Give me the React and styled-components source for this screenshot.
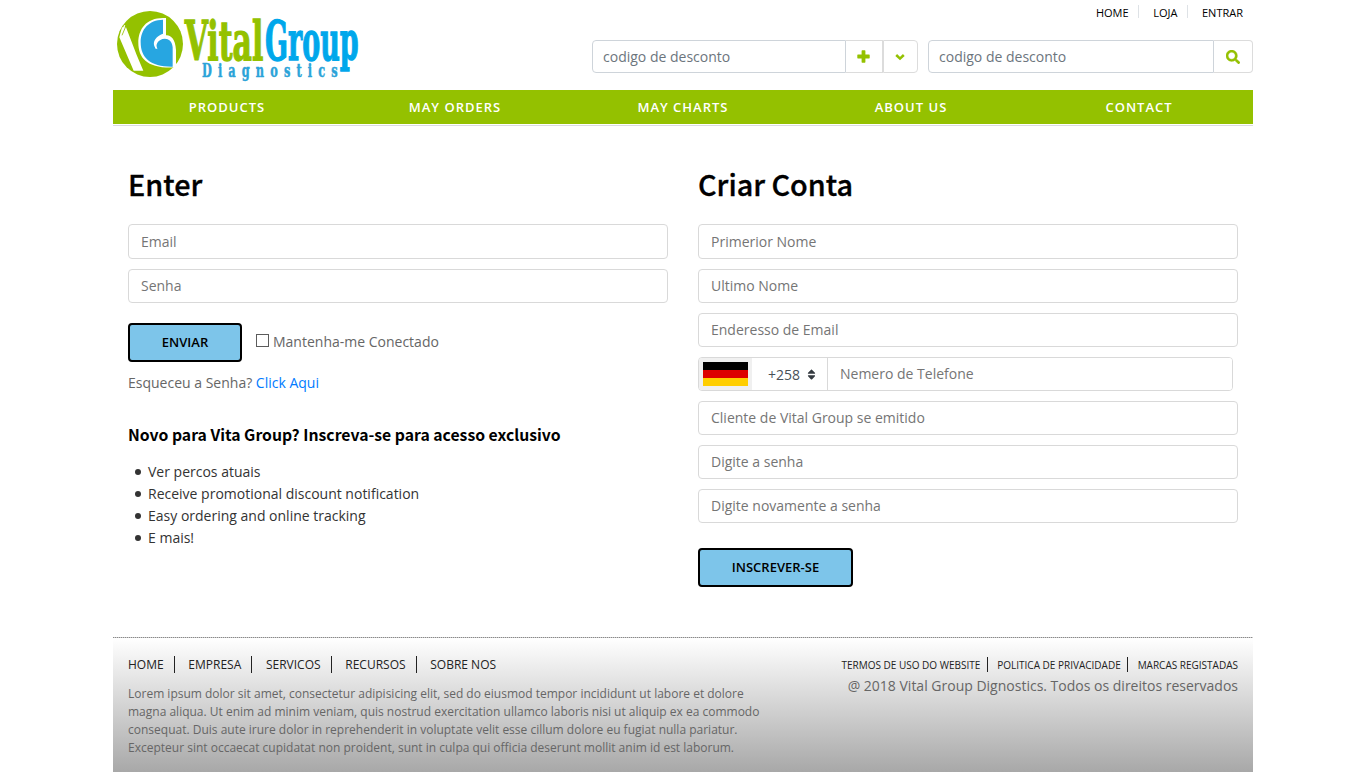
import React from "react";
import styled, { createGlobalStyle } from "styled-components";
import { FaSearch, FaSort } from "react-icons/fa";

const GlobalStyle = createGlobalStyle`
  *, *::before, *::after { box-sizing: border-box; }
  body {
    margin: 0;
    background: #fff;
    color: #666;
    font-family: "Open Sans", sans-serif;
    font-size: 14px;
    line-height: 22px;
    overflow: hidden;
  }
  a { color: inherit; text-decoration: none; }
  input, button { font-family: inherit; }
`;

const Container = styled.div`
  width: 1140px;
  margin: 0 auto;
`;

const Header = styled.header`
  display: flex;
  justify-content: space-between;
  height: 90px;
`;

const LogoArt = styled.svg`
  display: block;
  width: 255px;
  height: 90px;
  overflow: visible;
`;

const HeaderTools = styled.div`
  display: flex;
  flex-direction: column;
  align-items: flex-end;
`;

const TopLinks = styled.nav`
  display: flex;
  height: 40px;
  padding: 5px 10px 0 0;
  font-size: 11px;
  line-height: 16px;
  color: #000;
`;

const TopLink = styled.a`
  height: 13px;
  padding-left: ${(p) => (p.$first ? 0 : 14)}px;
  padding-right: ${(p) => (p.$last ? 0 : 9.6)}px;
  border-right: ${(p) => (p.$last ? "0" : "1px solid #dee2e6")};
`;

const Searches = styled.div`
  display: flex;
  gap: 10px;
`;

const SearchGroup = styled.div`
  display: flex;
  width: ${(p) => p.$width}px;
  height: 33px;
`;

const SearchInput = styled.input`
  flex: 1;
  min-width: 0;
  padding: 0 10px;
  border: 1px solid #ced4da;
  border-radius: 4px 0 0 4px;
  font-size: 14px;
  outline: 0;
  &::placeholder { color: #6c757d; opacity: 1; }
`;

const IconButton = styled.button`
  display: flex;
  align-items: center;
  justify-content: center;
  width: ${(p) => p.$width}px;
  padding: 0 ${(p) => p.$inset || 0}px 0 0;
  border: 1px solid #dcdcdc;
  border-left-width: ${(p) => (p.$divided ? 1 : 0)}px;
  border-radius: ${(p) => (p.$end ? "0 4px 4px 0" : "0")};
  background: #fff;
  color: #94c100;
`;

const MainNav = styled.nav`
  display: grid;
  grid-template-columns: repeat(5, 1fr);
  height: 34px;
  background: #94c100;
  color: #fff;
  font-size: 13px;
  font-weight: 600;
  letter-spacing: 1px;
  line-height: 34px;
  text-align: center;
`;

const NavRule = styled.div`
  height: 2px;
  border-bottom: 1px solid #d9dcdf;
`;

const Main = styled.main`
  display: grid;
  grid-template-columns: 540px 540px;
  column-gap: 30px;
  height: 511px;
  padding: 39px 15px 0;
`;

const Title = styled.h1`
  height: 59px;
  margin: 0;
  color: #000;
  font-family: "Noto Sans CJK SC", sans-serif;
  font-size: 28.8px;
  font-weight: 500;
  line-height: 37px;
  -webkit-text-stroke: 0.35px #000;
`;

const Fields = styled.div`
  display: flex;
  flex-direction: column;
  gap: 10px;
`;

const Field = styled.input`
  height: 34px;
  padding: 0 12px 2px;
  border: 1px solid #d9d9d9;
  border-radius: 4px;
  font-size: 14px;
  outline: 0;
  &:first-child { height: 35px; padding-bottom: 0; }
  &::placeholder { color: #757575; opacity: 1; }
`;

const PhoneRow = styled.div`
  display: flex;
  width: 535px;
  height: 34px;
  border: 1px solid #d9d9d9;
  border-radius: 4px;
  overflow: hidden;
`;

const FlagBox = styled.div`
  display: flex;
  align-items: center;
  width: 53px;
  padding-left: 4px;
  background: #f0f0f0;
`;

const Flag = styled.svg`
  display: block;
  width: 45px;
  height: 24px;
`;

const DialCode = styled.div`
  display: flex;
  align-items: center;
  gap: 5px;
  width: 76px;
  padding: 2px 0 0 16px;
  border-right: 1px solid #d9d9d9;
  color: #495057;
  svg { color: #343a40; margin-top: -2px; }
`;

const PhoneInput = styled.input`
  flex: 1;
  padding: 0 12px 2px;
  border: 0;
  font-size: 14px;
  outline: 0;
  &::placeholder { color: #757575; opacity: 1; }
`;

const SubmitButton = styled.button`
  width: ${(p) => p.$width}px;
  height: 39px;
  margin-top: ${(p) => p.$top}px;
  padding: 0 0 2px;
  border: 2px solid #000;
  border-radius: 4px;
  background: #7dc5ea;
  color: #000;
  font-size: 13px;
  font-weight: 600;
`;

const SubmitRow = styled.div`
  display: flex;
  align-items: flex-end;
  gap: 14px;
`;

const Remember = styled.label`
  display: flex;
  align-items: center;
  gap: 4px;
  height: 39px;
  padding-bottom: 2px;
`;

const Checkbox = styled.input`
  appearance: none;
  width: 13px;
  height: 13px;
  margin: 0 0 2px;
  border: 1px solid #5c5c5c;
  background: #fff;
`;

const Forgot = styled.p`
  margin: 10px 0 0;
  a { color: #007bff; }
`;

const Subtitle = styled.h2`
  margin: 30px 0 0;
  color: #000;
  font-family: "Noto Sans CJK SC", sans-serif;
  font-size: 15.75px;
  font-weight: 600;
  line-height: 22px;
`;

const Benefits = styled.ul`
  margin: 15px 0 0;
  padding: 0 0 0 7px;
  list-style: none;
  color: #333;
`;

const Benefit = styled.li`
  display: flex;
  align-items: center;
  gap: 7px;
  &::before {
    content: "";
    width: 6px;
    height: 6px;
    border-radius: 50%;
    background: #333;
  }
`;

const FooterRule = styled.div`
  height: 1px;
  background: repeating-linear-gradient(90deg, #8a8a8a 0 1px, #ccc 1px 2px);
`;

const Footer = styled.footer`
  display: flex;
  justify-content: space-between;
  height: 134px;
  padding: 18px 15px 0;
  background: linear-gradient(#fff, #a8a8a8);
`;

const FooterAbout = styled.div`
  width: 645px;
`;

const FooterLegal = styled.div`
  display: flex;
  flex-direction: column;
  align-items: flex-end;
`;

const FooterLinks = styled.nav`
  display: flex;
  color: #222;
  font-size: ${(p) => (p.$small ? 10 : 12)}px;
  line-height: 17px;
  padding-top: ${(p) => (p.$small ? 1 : 0)}px;
`;

const FooterLink = styled.a`
  height: ${(p) => (p.$small ? 15 : 17)}px;
  padding-right: ${(p) => (p.$last ? 0 : p.$small ? 6.5 : 10)}px;
  margin-right: ${(p) => (p.$last ? 0 : p.$small ? 9.4 : 13.7)}px;
  border-right: ${(p) => (p.$last ? "0" : "1px solid #222")};
`;

const Blurb = styled.p`
  margin: 12px 0 0;
  font-size: 12px;
  line-height: 18px;
`;

const Copyright = styled.p`
  margin: 3px 0 0;
`;

function Logo() {
  return (
    <LogoArt viewBox="15 0 765 270" role="img" aria-label="VitalGroup Diagnostics">
      <circle cx="126" cy="132" r="99" fill="#94c100" />
      <path d="M34 112 L42 82 L54 82 L86 165 L106 212 L77 212 Z" fill="#fff" />
      <path d="M38 108 L50 76" stroke="#fff" strokeWidth="4" />
      <path d="M42 106 L53 80" stroke="#94c100" strokeWidth="2.5" />
      <path d="M174 54 C118 50 91 84 91 128 C91 176 120 207 204 202 L204 150 C202 112 184 104 174 106 Z" fill="#fff" />
      <path d="M165 59 C122 60 98 88 98 127 C98 174 128 201 194 200 L194 142 C192 118 172 111 156 121 C146 127 142 139 149 148 C132 139 132 114 165 101 Z" fill="#27a6e1" />
      <path d="M145 146 C136 128 150 110 172 110" fill="none" stroke="#fff" strokeWidth="4" />
      <g fontFamily="'DejaVu Serif', serif" fontWeight="700" strokeWidth="4">
        <text x="230" y="181" fontSize="164" fill="#94c100" stroke="#94c100" textLength="236" lengthAdjust="spacingAndGlyphs">Vital</text>
        <text x="471" y="181" fontSize="164" fill="#00a7eb" stroke="#00a7eb" textLength="281" lengthAdjust="spacingAndGlyphs">Group</text>
      </g>
      <g transform="translate(282 230) scale(0.62 1)" fontFamily="'DejaVu Serif', serif" fontWeight="700">
        <text fontSize="55" fill="#2ba3d8" stroke="#2ba3d8" strokeWidth="1.5" letterSpacing="29.5">Diagnostics</text>
      </g>
    </LogoArt>
  );
}

function PlusIcon() {
  return (
    <svg width="13" height="13" viewBox="0 0 13 13" fill="currentColor">
      <path d="M5.2 0.3 H7.8 Q8.4 .3 8.4 .9 V4.6 H12.1 Q12.7 4.6 12.7 5.2 V7.8 Q12.7 8.4 12.1 8.4 H8.4 V12.1 Q8.4 12.7 7.8 12.7 H5.2 Q4.6 12.7 4.6 12.1 V8.4 H.9 Q.3 8.4 .3 7.8 V5.2 Q.3 4.6 .9 4.6 H4.6 V.9 Q4.6 .3 5.2 .3 Z" />
    </svg>
  );
}

function ChevronIcon() {
  return (
    <svg width="10" height="8" viewBox="0 0 10 8" fill="none" stroke="currentColor" strokeWidth="2.5">
      <path d="M1.2 2 L5 5.6 L8.8 2" />
    </svg>
  );
}

const footerLinks = ["HOME", "EMPRESA", "SERVICOS", "RECURSOS", "SOBRE NOS"];
const legalLinks = ["TERMOS DE USO DO WEBSITE", "POLITICA DE PRIVACIDADE", "MARCAS REGISTADAS"];

export default function App() {
  return (
    <Container>
      <GlobalStyle />
      <Header>
        <Logo />
        <HeaderTools>
          <TopLinks>
            <TopLink $first>HOME</TopLink>
            <TopLink>LOJA</TopLink>
            <TopLink $last>ENTRAR</TopLink>
          </TopLinks>
          <Searches>
            <SearchGroup $width={326}>
              <SearchInput placeholder="codigo de desconto" />
              <IconButton $width={37} $inset={1}><PlusIcon /></IconButton>
              <IconButton $width={35} $inset={1} $divided $end><ChevronIcon /></IconButton>
            </SearchGroup>
            <SearchGroup $width={325}>
              <SearchInput placeholder="codigo de desconto" />
              <IconButton $width={39} $end><FaSearch size={14} stroke="currentColor" strokeWidth={14} /></IconButton>
            </SearchGroup>
          </Searches>
        </HeaderTools>
      </Header>
      <MainNav>
        <a>PRODUCTS</a>
        <a>MAY ORDERS</a>
        <a>MAY CHARTS</a>
        <a>ABOUT US</a>
        <a>CONTACT</a>
      </MainNav>
      <NavRule />
      <Main>
        <section>
          <Title>Enter</Title>
          <Fields>
            <Field placeholder="Email" />
            <Field placeholder="Senha" />
          </Fields>
          <SubmitRow>
            <SubmitButton $width={114} $top={20}>ENVIAR</SubmitButton>
            <Remember>
              <Checkbox type="checkbox" />
              Mantenha-me Conectado
            </Remember>
          </SubmitRow>
          <Forgot>Esqueceu a Senha? <a>Click Aqui</a></Forgot>
          <Subtitle>Novo para Vita Group? Inscreva-se para acesso exclusivo</Subtitle>
          <Benefits>
            <Benefit>Ver percos atuais</Benefit>
            <Benefit>Receive promotional discount notification</Benefit>
            <Benefit>Easy ordering and online tracking</Benefit>
            <Benefit>E mais!</Benefit>
          </Benefits>
        </section>
        <section>
          <Title>Criar Conta</Title>
          <Fields>
            <Field placeholder="Primerior Nome" />
            <Field placeholder="Ultimo Nome" />
            <Field placeholder="Enderesso de Email" />
            <PhoneRow>
              <FlagBox>
                <Flag viewBox="0 0 45 24">
                  <rect width="45" height="8" fill="#000" />
                  <rect y="8" width="45" height="8" fill="#d00" />
                  <rect y="16" width="45" height="8" fill="#ffce00" />
                </Flag>
              </FlagBox>
              <DialCode>+258 <FaSort size={13} /></DialCode>
              <PhoneInput placeholder="Nemero de Telefone" />
            </PhoneRow>
            <Field placeholder="Cliente de Vital Group se emitido" />
            <Field placeholder="Digite a senha" />
            <Field placeholder="Digite novamente a senha" />
          </Fields>
          <SubmitButton $width={155} $top={25}>INSCREVER-SE</SubmitButton>
        </section>
      </Main>
      <FooterRule />
      <Footer>
        <FooterAbout>
          <FooterLinks>
            {footerLinks.map((t, i) => (
              <FooterLink key={t} $last={i === footerLinks.length - 1}>{t}</FooterLink>
            ))}
          </FooterLinks>
          <Blurb>
            Lorem ipsum dolor sit amet, consectetur adipisicing elit, sed do eiusmod tempor incididunt ut labore et dolore magna aliqua. Ut enim ad minim veniam, quis nostrud exercitation ullamco laboris nisi ut aliquip ex ea commodo consequat. Duis aute irure dolor in reprehenderit in voluptate velit esse cillum dolore eu fugiat nulla pariatur. Excepteur sint occaecat cupidatat non proident, sunt in culpa qui officia deserunt mollit anim id est laborum.
          </Blurb>
        </FooterAbout>
        <FooterLegal>
          <FooterLinks $small>
            {legalLinks.map((t, i) => (
              <FooterLink key={t} $small $last={i === legalLinks.length - 1}>{t}</FooterLink>
            ))}
          </FooterLinks>
          <Copyright>@ 2018 Vital Group Dignostics. Todos os direitos reservados</Copyright>
        </FooterLegal>
      </Footer>
    </Container>
  );
}
